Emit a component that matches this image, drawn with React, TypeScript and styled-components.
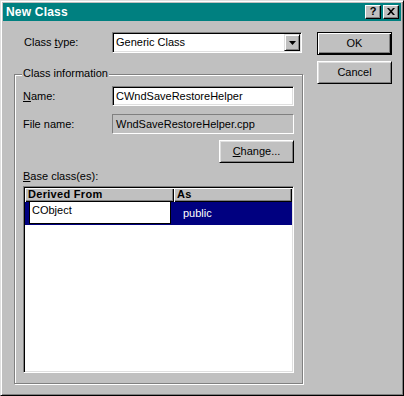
import React from "react";
import styled, { createGlobalStyle } from "styled-components";

const Global = createGlobalStyle`
  html, body { margin: 0; padding: 0; background: #c0c0c0; }
  body { font-family: "Liberation Sans", Arial, sans-serif; font-size: 11px; color: #000; }
  * { box-sizing: border-box; }
  u { text-decoration: underline; text-underline-offset: 1px; }
`;

const Window = styled.div`
  width: 404px;
  height: 396px;
  background: #c0c0c0;
  border: 1px solid;
  border-color: #dfdfdf #000 #000 #dfdfdf;
  box-shadow: inset 1px 1px 0 #fff, inset -1px -1px 0 #808080;
  padding: 2px;
  display: flex;
  flex-direction: column;
`;

const TitleBar = styled.div`
  height: 18px;
  background: #008080;
  display: flex;
  align-items: center;
  padding: 0 2px 0 3px;
  gap: 2px;
`;

const Title = styled.div`
  flex: 1;
  color: #fff;
  font-weight: bold;
  font-size: 12px;
  line-height: 14px;
  letter-spacing: 0.2px;
`;

const CaptionButton = styled.div`
  width: 16px;
  height: 14px;
  background: #c0c0c0;
  border: 1px solid;
  border-color: #fff #000 #000 #fff;
  box-shadow: inset -1px -1px 0 #808080;
  display: flex;
  align-items: center;
  justify-content: center;
  font-weight: bold;
  font-size: 11px;
  line-height: 11px;
  padding-bottom: 1px;
`;

const Body = styled.div`
  flex: 1;
  display: flex;
  padding: 11px 9px 0 11px;
  gap: 13px;
`;

const LeftCol = styled.div`
  width: 290px;
  display: flex;
  flex-direction: column;
`;

const RightCol = styled.div`
  width: 75px;
  display: flex;
  flex-direction: column;
  gap: 6px;
`;

const TypeRow = styled.div`
  display: flex;
  align-items: center;
  height: 21px;
  padding-left: 10px;
`;

const Label = styled.div<{ $w: number }>`
  width: ${(p) => p.$w}px;
  line-height: 13px;
  white-space: nowrap;
`;

const Sunken = styled.div<{ $bg?: string }>`
  background: ${(p) => p.$bg || "#fff"};
  border: 1px solid;
  border-color: #808080 #fff #fff #808080;
  box-shadow: inset 1px 1px 0 #000, inset -1px -1px 0 #dfdfdf;
`;

const Combo = styled(Sunken)`
  width: 190px;
  height: 21px;
  padding: 1px;
  display: flex;
  align-items: center;
`;

const ComboText = styled.div`
  flex: 1;
  padding-left: 2px;
  line-height: 13px;
`;

const ArrowButton = styled.div`
  width: 16px;
  height: 17px;
  background: #c0c0c0;
  border: 1px solid;
  border-color: #dfdfdf #000 #000 #dfdfdf;
  box-shadow: inset 1px 1px 0 #fff, inset -1px -1px 0 #808080;
  display: flex;
  align-items: center;
  justify-content: center;
`;

const Group = styled.div`
  position: relative;
  margin-top: 21px;
  width: 289px;
  height: 310px;
  border: 1px solid #808080;
  box-shadow: 1px 1px 0 #fff, inset 1px 1px 0 #fff;
  padding: 11px 8px 10px 8px;
  display: flex;
  flex-direction: column;
`;

const Legend = styled.div`
  position: absolute;
  top: -8px;
  left: 7px;
  padding: 0 1px;
  background: #c0c0c0;
  line-height: 13px;
`;

const FieldRow = styled.div<{ $mt?: number }>`
  display: flex;
  align-items: center;
  height: 20px;
  margin-top: ${(p) => p.$mt || 0}px;
`;

const Edit = styled(Sunken)`
  width: 182px;
  height: 20px;
  padding: 0 3px;
  line-height: 18px;
  white-space: nowrap;
  overflow: hidden;
`;

const ReadOnly = styled.div`
  width: 182px;
  height: 20px;
  padding: 0 3px;
  line-height: 18px;
  background: #c0c0c0;
  border: 1px solid;
  border-color: #808080 #fff #fff #808080;
  white-space: nowrap;
`;

const ButtonRow = styled.div`
  display: flex;
  justify-content: flex-end;
  margin-top: 6px;
`;

const Button = styled.div<{ $default?: boolean }>`
  width: 75px;
  height: 23px;
  background: #c0c0c0;
  display: flex;
  align-items: center;
  justify-content: center;
  line-height: 13px;
  ${(p) =>
    p.$default
      ? `border: 1px solid #000;
         box-shadow: inset 1px 1px 0 #fff, inset -1px -1px 0 #000, inset -2px -2px 0 #808080;`
      : `border: 1px solid; border-color: #fff #000 #000 #fff;
         box-shadow: inset 1px 1px 0 #dfdfdf, inset -1px -1px 0 #808080;`}
`;

const BaseLabel = styled.div`
  margin-top: 7px;
  line-height: 13px;
  height: 13px;
`;

const List = styled(Sunken)`
  margin-top: 3px;
  flex: 1;
  padding: 1px;
  display: flex;
  flex-direction: column;
`;

const Header = styled.div`
  display: flex;
  height: 14px;
`;

const HeaderCell = styled.div<{ $w: number }>`
  width: ${(p) => p.$w}px;
  height: 14px;
  background: #c0c0c0;
  box-shadow: inset 1px 1px 0 #fff, inset -1px -1px 0 #000, inset -2px -2px 0 #808080;
  font-weight: bold;
  padding-left: 3px;
  line-height: 13px;
  letter-spacing: 0.3px;
`;

const Row = styled.div`
  position: relative;
  display: flex;
  height: 23px;
  background: #000080;
`;

const Cell = styled.div<{ $w: number }>`
  width: ${(p) => p.$w}px;
  color: #fff;
  line-height: 23px;
  padding-left: 9px;
`;

const InPlaceEdit = styled.div`
  position: absolute;
  left: 4px;
  top: -1px;
  width: 142px;
  height: 23px;
  background: #fff;
  border: 1px solid #000;
  padding: 2px 0 0 2px;
  line-height: 13px;
`;

export default function App() {
  return (
    <>
      <Global />
      <Window>
        <TitleBar>
          <Title>New Class</Title>
          <CaptionButton>?</CaptionButton>
          <CaptionButton>
            <svg width="8" height="7" viewBox="0 0 8 7">
              <path d="M0 0h2l2 2.2L6 0h2L5 3.5 8 7H6L4 4.8 2 7H0l3-3.5z" fill="#000" />
            </svg>
          </CaptionButton>
        </TitleBar>
        <Body>
          <LeftCol>
            <TypeRow>
              <Label $w={88}>
                Class <u>t</u>ype:
              </Label>
              <Combo>
                <ComboText>Generic Class</ComboText>
                <ArrowButton>
                  <svg width="7" height="4" viewBox="0 0 7 4">
                    <path d="M0 0h7L3.5 4z" fill="#000" />
                  </svg>
                </ArrowButton>
              </Combo>
            </TypeRow>
            <Group>
              <Legend>Class information</Legend>
              <FieldRow>
                <Label $w={89}>
                  <u>N</u>ame:
                </Label>
                <Edit>CWndSaveRestoreHelper</Edit>
              </FieldRow>
              <FieldRow $mt={8}>
                <Label $w={89}>File name:</Label>
                <ReadOnly>WndSaveRestoreHelper.cpp</ReadOnly>
              </FieldRow>
              <ButtonRow>
                <Button>
                  <span>
                    <u>C</u>hange...
                  </span>
                </Button>
              </ButtonRow>
              <BaseLabel>
                <u>B</u>ase class(es):
              </BaseLabel>
              <List>
                <Header>
                  <HeaderCell $w={149}>Derived From</HeaderCell>
                  <HeaderCell $w={118}>As</HeaderCell>
                </Header>
                <Row>
                  <Cell $w={149} />
                  <Cell $w={118}>public</Cell>
                  <InPlaceEdit>CObject</InPlaceEdit>
                </Row>
              </List>
            </Group>
          </LeftCol>
          <RightCol>
            <Button $default>OK</Button>
            <Button>Cancel</Button>
          </RightCol>
        </Body>
      </Window>
    </>
  );
}
